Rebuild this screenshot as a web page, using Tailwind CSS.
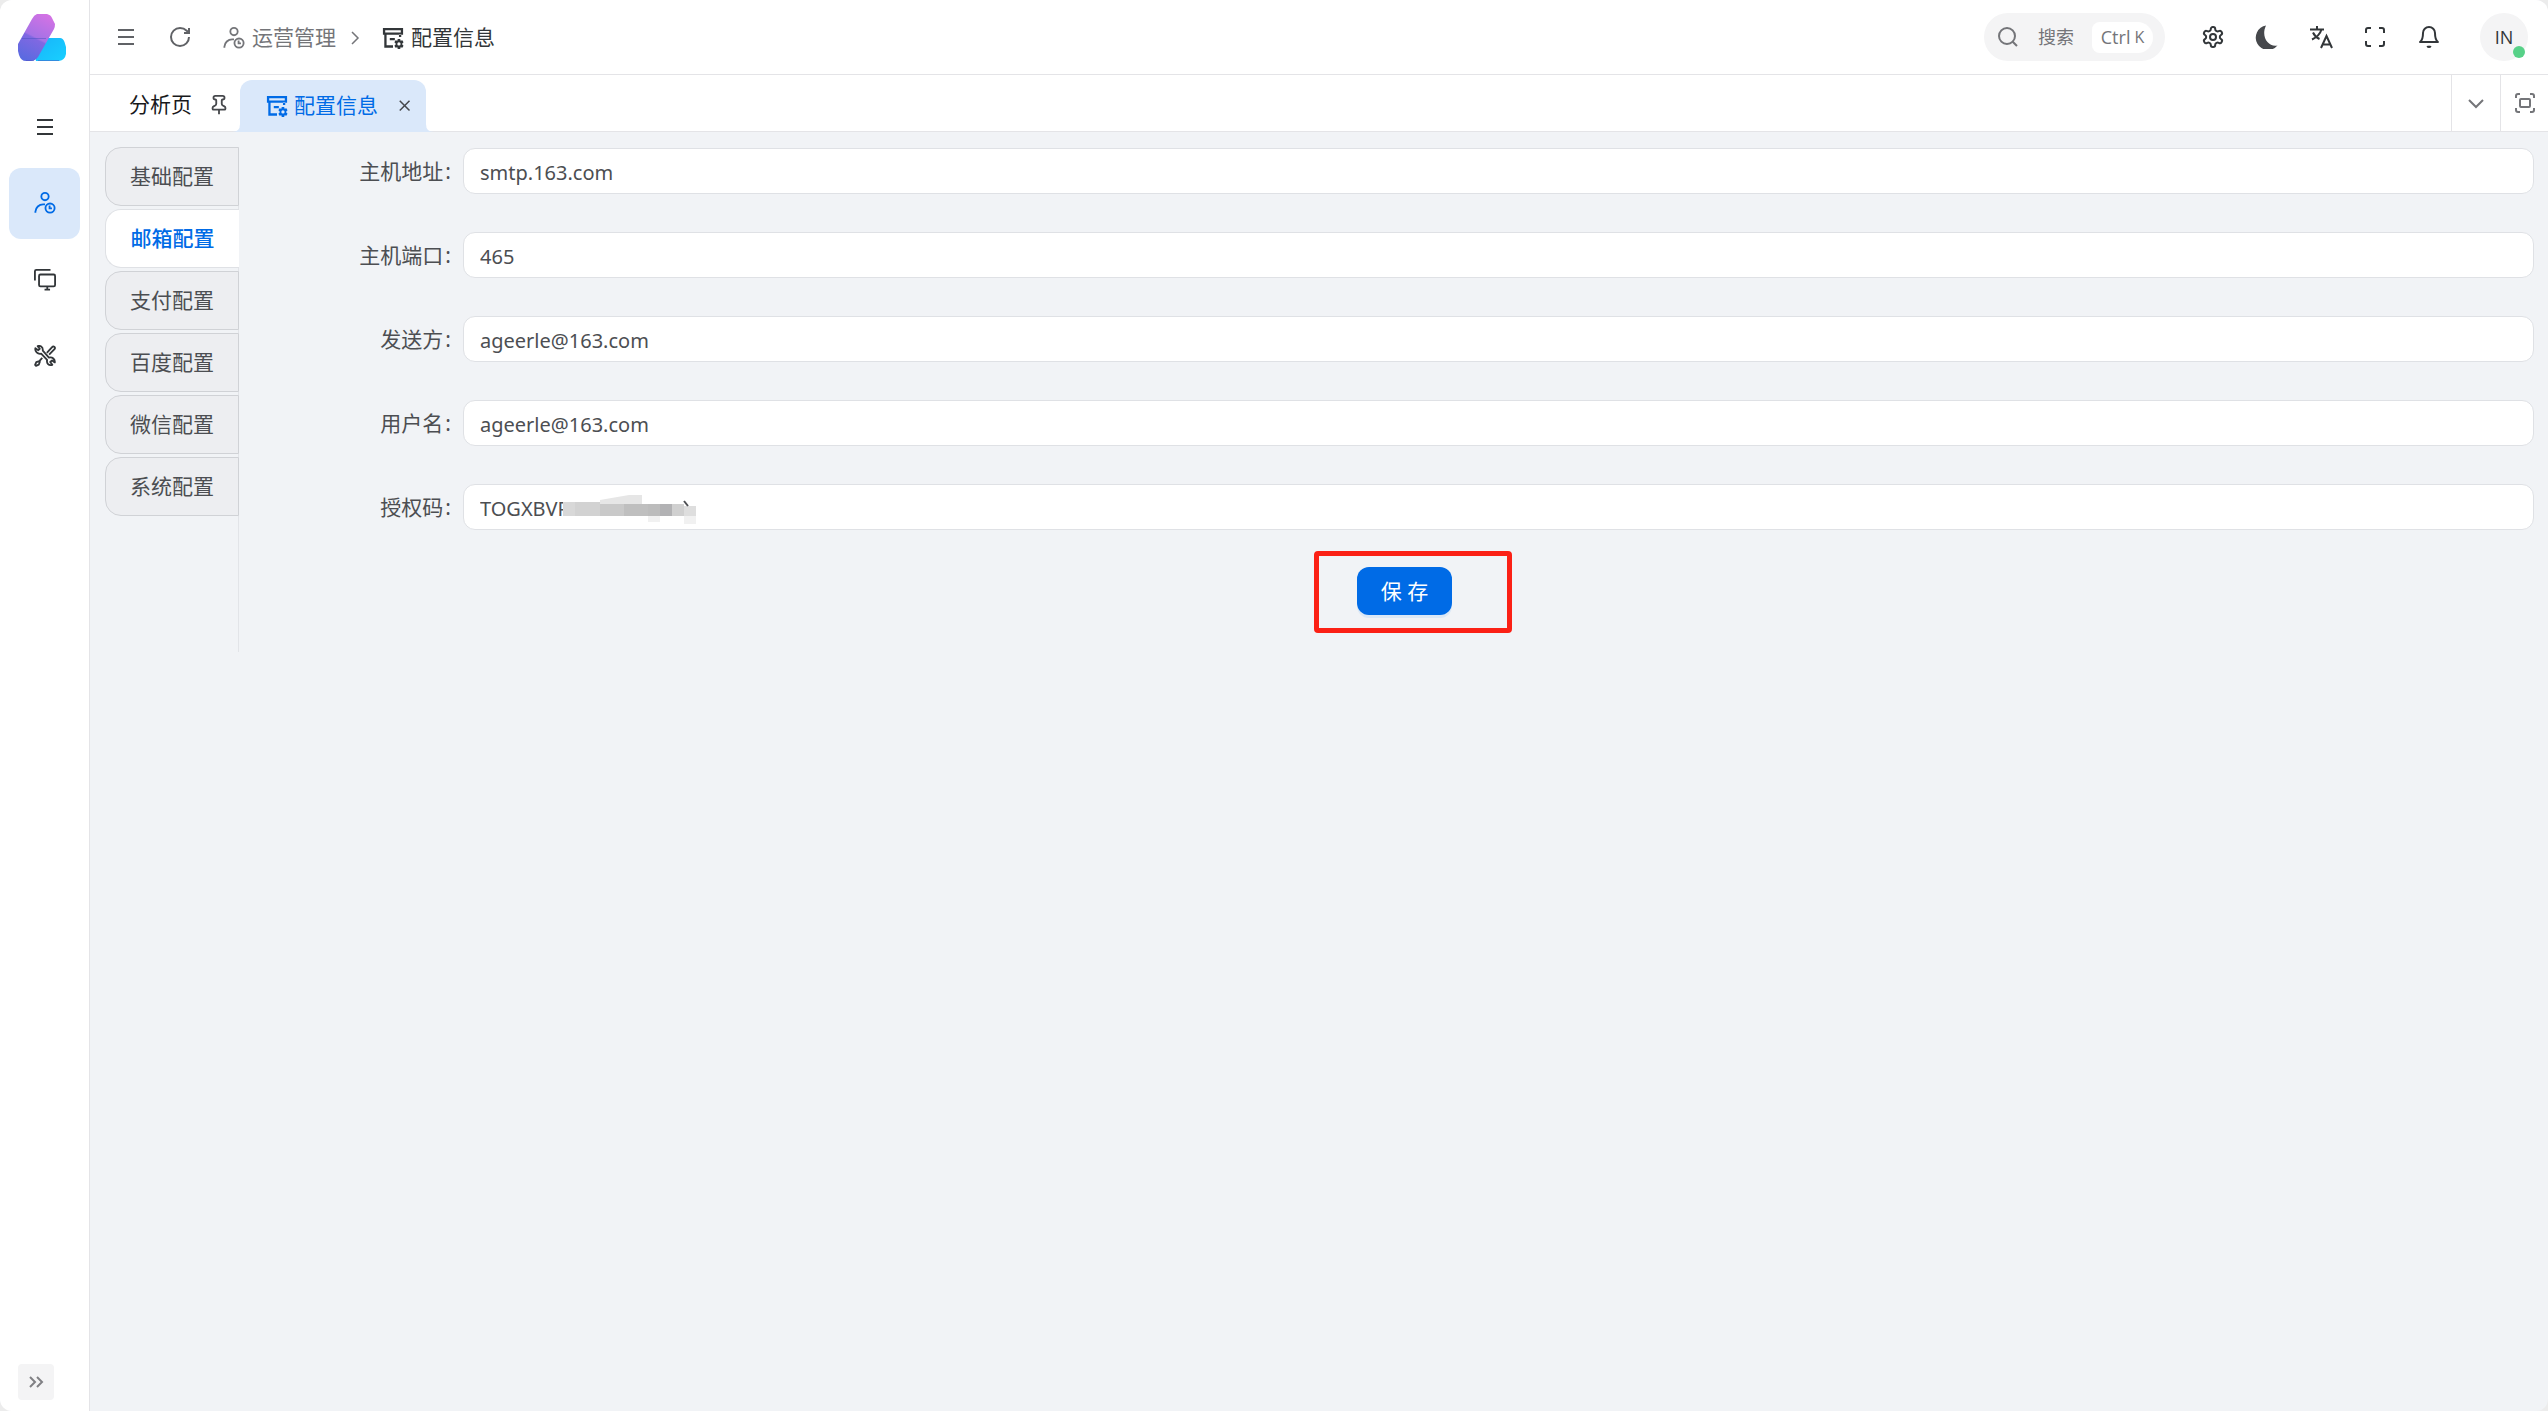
<!DOCTYPE html>
<html lang="zh-CN">
<head>
  <meta charset="UTF-8">
  <meta name="viewport" content="width=device-width, initial-scale=1.0">
  <title>配置信息</title>
  <script src="https://cdn.jsdelivr.net/npm/@tailwindcss/browser@4"></script>
</head>
<body class="bg-[#ececec] font-['Noto_Sans','Noto_Sans_CJK_SC',sans-serif] text-[21px] text-[#323639]">

  <!-- Shared icons -->
  <svg class="hidden">
    <symbol id="menu" viewBox="0 0 24 24"><path d="M4 5h16M4 12h16M4 19h16"/></symbol>
    <symbol id="user-clock" viewBox="0 0 24 24">
      <circle cx="12" cy="5" r="4"/>
      <path d="M1.500 22.500v-1a8.500 8.500 0 0 1 8.500-8h2"/>
      <circle cx="17.500" cy="17.500" r="5"/>
      <path d="M17 14.800v3h2.600"/>
    </symbol>
    <symbol id="page-gear" viewBox="0 0 24 24">
      <path fill="currentColor" stroke="none" fill-rule="evenodd" d="M1 1h22v7.500H5V20h7v2.500H2.500v-14H1zM3.500 3.500V6h17V3.500zM8.500 12H14v2.500H8.500zM18.500 8H21v3h-2.500z"/>
      <path fill="currentColor" stroke="none" fill-rule="evenodd" d="M17.200 13h2.600l.5 1.900 1.900-.5 1.300 2.200-1.400 1.400v1l1.400 1.400-1.300 2.200-1.900-.5-.5 1.900h-2.600l-.5-1.900-1.900.5-1.300-2.200 1.400-1.400v-1l-1.400-1.400 1.300-2.200 1.900.5zM18.500 16.700a1.800 1.800 0 1 0 0 3.600 1.800 1.800 0 0 0 0-3.600z"/>
    </symbol>
  </svg>

  <div class="flex min-h-screen overflow-hidden rounded-xl bg-[#f1f3f6]">

    <!-- Sidebar -->
    <aside class="flex w-[90px] shrink-0 flex-col border-r border-[#e4e4e7] bg-white">
      <a href="#" aria-label="首页" class="flex h-[75px] items-center pl-[18px]">
        <svg class="size-12" viewBox="0 0 48 48">
          <defs>
            <linearGradient id="purple" x1="0.7" y1="0" x2="0.3" y2="1">
              <stop offset="0" stop-color="#d272e4"/>
              <stop offset="0.5" stop-color="#a572e6"/>
              <stop offset="0.54" stop-color="#8068e2"/>
              <stop offset="1" stop-color="#5b6ae0"/>
            </linearGradient>
            <linearGradient id="cyan" x1="0" y1="0" x2="1" y2="1">
              <stop offset="0" stop-color="#18b4fa"/>
              <stop offset="1" stop-color="#18d0ff"/>
            </linearGradient>
          </defs>
          <path fill="url(#cyan)" d="M27 24h15q3 0 4.500 4l1.500 5v7q-1 6-7 7H18q-1-2 0-4z"/>
          <path fill="url(#purple)" d="M19 0h10q4 1 5 4l3 6q0 3-1 5L20 43q-3 4-7 4H8q-5 0-7-6l-1-4v-7L14 5q2-4 5-5z"/>
          <path d="M4 24.500h24M8 46.500h8M20 46.500h21" fill="none" stroke="#4b4fc0" stroke-opacity="0.5"/>
        </svg>
      </a>
      <nav class="mt-[17px] flex flex-1 flex-col gap-[5px] px-[9px] stroke-[2]">
        <button aria-label="菜单" class="flex h-[71px] w-full items-center justify-center rounded-xl pb-0.5">
          <svg class="size-6 fill-none stroke-current"><use href="#menu"/></svg>
        </button>
        <button aria-label="运营管理" class="flex h-[71px] w-full items-center justify-center rounded-xl bg-[#dae8fa] pb-0.5 text-[#006be6]">
          <svg class="size-[22px] fill-none stroke-current"><use href="#user-clock"/></svg>
        </button>
        <button aria-label="监控" class="flex h-[71px] w-full items-center justify-center rounded-xl">
          <svg class="size-[22px] fill-none stroke-current" viewBox="0 0 24 24">
            <path d="M1 12.500V2.500q0-1.500 1.500-1.500H18"/>
            <rect x="5.500" y="6" width="17.500" height="13" rx="1.500"/>
            <path d="M11.500 22.500h6M14.500 19v3.500"/>
          </svg>
        </button>
        <button aria-label="工具" class="flex h-[71px] w-full items-center justify-center rounded-xl">
          <svg class="size-[22px] fill-none stroke-current" stroke-linejoin="round" viewBox="0 0 24 24">
            <path d="M1.500 3.500l3.200 2.200 1.600-1.600L4 1.200c2.400-.8 6 .6 5.600 5l6.700 7.500c4-.8 6.700 1.600 6.400 5.300l-3-2.200-2 1.800 2.300 3c-4 1.400-6.500-1.500-5.700-5.300L7.800 9.500c-4 .8-7-2.500-6.300-6z"/>
            <path d="M14 8.500l5.500-6q1.500-1.600 2.800-.4t-.2 2.700L16.500 10.500M9 14l-3.200 3.500M5.800 17.500l-3.300 1.200-1.300 3 1 1 3-1.200 1.200-3.200z"/>
          </svg>
        </button>
      </nav>
      <button aria-label="展开" class="mb-[11px] ml-[18px] flex size-9 items-center justify-center rounded bg-[#f4f4f5] text-[#808084]">
        <svg class="size-6 fill-none stroke-current stroke-2" viewBox="0 0 24 24"><path d="m6 17 5-5-5-5M13 17l5-5-5-5"/></svg>
      </button>
    </aside>

    <div class="flex min-w-0 flex-1 flex-col">

      <!-- Header -->
      <header class="flex h-[75px] items-center border-b border-[#e4e4e7] bg-white pr-5 pl-6">
        <button aria-label="折叠菜单" class="text-[#606266]"><svg class="size-6 fill-none stroke-current stroke-2"><use href="#menu"/></svg></button>
        <button aria-label="刷新" class="ml-[30px] text-[#606266]">
          <svg class="size-6 fill-none stroke-current stroke-2" viewBox="0 0 24 24"><path d="M21 12a9 9 0 1 1-9-9c2.520 0 4.930 1 6.740 2.740L21 8M21 3v5h-5"/></svg>
        </button>
        <nav class="ml-[31px] flex items-center pt-0.5">
          <a href="#" class="flex items-center gap-[7px] text-[#747579]">
            <svg class="size-[22px] fill-none stroke-current stroke-2"><use href="#user-clock"/></svg>运营管理
          </a>
          <svg class="mx-[7px] size-6 fill-none stroke-[#747579] stroke-[1.500]" viewBox="0 0 24 24"><path d="m9 18 6-6-6-6"/></svg>
          <a href="#" class="ml-2 flex items-center gap-[7px]">
            <svg class="size-[22px]"><use href="#page-gear"/></svg>配置信息
          </a>
        </nav>

        <button class="ml-auto flex h-12 items-center rounded-full bg-[#f4f4f5] pr-3 pl-3 text-[18px] text-[#747579]">
          <svg class="size-6 fill-none stroke-current stroke-2" viewBox="0 0 24 24"><circle cx="11" cy="11" r="8"/><path d="m21 21-4.300-4.300"/></svg>
          <span class="ml-[18px]">搜索</span>
          <kbd class="ml-[18px] flex h-[31px] w-[61px] items-center justify-center gap-1 rounded-lg rounded-r-2xl bg-white font-['Open_Sans',sans-serif] text-[18px]">Ctrl<span class="text-base">K</span></kbd>
        </button>
        <div class="ml-9 flex items-center gap-[30px]">
          <button aria-label="设置">
            <svg class="size-6 fill-none stroke-current stroke-2" viewBox="0 0 24 24"><path d="M12.220 2h-.44a2 2 0 0 0-2 2v.18a2 2 0 0 1-1 1.730l-.43.25a2 2 0 0 1-2 0l-.15-.08a2 2 0 0 0-2.730.73l-.22.38a2 2 0 0 0 .73 2.730l.15.1a2 2 0 0 1 1 1.720v.51a2 2 0 0 1-1 1.740l-.15.09a2 2 0 0 0-.73 2.730l.22.38a2 2 0 0 0 2.730.73l.15-.08a2 2 0 0 1 2 0l.43.25a2 2 0 0 1 1 1.730V20a2 2 0 0 0 2 2h.44a2 2 0 0 0 2-2v-.18a2 2 0 0 1 1-1.730l.43-.25a2 2 0 0 1 2 0l.15.08a2 2 0 0 0 2.730-.73l.22-.39a2 2 0 0 0-.73-2.730l-.15-.08a2 2 0 0 1-1-1.740v-.5a2 2 0 0 1 1-1.740l.15-.09a2 2 0 0 0 .73-2.730l-.22-.38a2 2 0 0 0-2.730-.73l-.15.08a2 2 0 0 1-2 0l-.43-.25a2 2 0 0 1-1-1.730V4a2 2 0 0 0-2-2z"/><circle cx="12" cy="12" r="3"/></svg>
          </button>
          <button aria-label="深色模式">
            <svg class="size-6 fill-[#46484c]" viewBox="0 0 24 24"><path d="M11 .5A12.300 12.300 0 1 0 22.500 20.500C13.500 22.500 5.500 12 11 .5z"/></svg>
          </button>
          <button aria-label="语言">
            <svg class="size-6 fill-none stroke-current stroke-2" viewBox="0 0 24 24"><path d="M1 4.500h14M8 1v3.500M3 14.500Q10.500 11 12.500 4.500M4 7.500q2 4.500 6.500 6.500M12 23l5.500-12L23 23M14 19.500h7"/></svg>
          </button>
          <button aria-label="全屏">
            <svg class="size-6 fill-none stroke-current stroke-2" viewBox="0 0 24 24"><path d="M8 3H5a2 2 0 0 0-2 2v3M21 8V5a2 2 0 0 0-2-2h-3M3 16v3a2 2 0 0 0 2 2h3M16 21h3a2 2 0 0 0 2-2v-3"/></svg>
          </button>
          <button aria-label="通知">
            <svg class="size-6 fill-none stroke-current stroke-2" stroke-linejoin="round" viewBox="0 0 24 24"><path d="M6 8a6 6 0 0 1 12 0c0 7 3 9 3 9H3s3-2 3-9M10.300 21a1.940 1.940 0 0 0 3.400 0"/></svg>
          </button>
        </div>
        <button class="relative ml-[39px] flex size-12 items-center justify-center rounded-full bg-[#f4f4f5] font-['Open_Sans',sans-serif] text-[18px]">
          IN
          <span class="absolute right-[3px] bottom-[3px] size-3 rounded-full bg-[#57d188]"></span>
        </button>
      </header>

      <!-- Page tabs -->
      <div class="flex h-[57px] border-b border-[#e4e4e7] bg-white">
        <button class="flex items-center pt-1 pr-2.5 pl-[39px] text-[#18191b]">
          分析页
          <svg class="ml-4 size-[22px] fill-none stroke-[#46484c] stroke-2" viewBox="0 0 24 24"><path d="M12 17v5M9 10.760a2 2 0 0 1-1.110 1.790l-1.780.9A2 2 0 0 0 5 15.240V16a1 1 0 0 0 1 1h12a1 1 0 0 0 1-1v-.76a2 2 0 0 0-1.110-1.790l-1.780-.9A2 2 0 0 1 15 10.760V7a1 1 0 0 1 1-1 2 2 0 0 0 0-4H8a2 2 0 0 0 0 4 1 1 0 0 1 1 1z"/></svg>
        </button>
        <div class="relative mt-[5px] -mb-px flex w-[186px] items-center rounded-t-xl bg-[#dae8fa] pb-px pl-[26px] text-[#006be6]">
          <svg class="absolute bottom-0 -left-2 size-2 fill-[#dae8fa]" viewBox="0 0 8 8"><path d="M8 0v8H0q8 0 8-8z"/></svg>
          <svg class="absolute -right-2 bottom-0 size-2 fill-[#dae8fa]" viewBox="0 0 8 8"><path d="M0 0v8h8q-8 0-8-8z"/></svg>
          <svg class="mr-1.5 size-[22px]"><use href="#page-gear"/></svg>
          <a href="#">配置信息</a>
          <button aria-label="关闭" class="ml-[18px] text-[#46484c]">
            <svg class="size-[18px] fill-none stroke-current stroke-2" viewBox="0 0 24 24"><path d="M18 5 5 18M5 5l13 13"/></svg>
          </button>
        </div>
        <button aria-label="更多" class="ml-auto flex w-[49px] items-center justify-center border-l border-[#e4e4e7] text-[#747579]">
          <svg class="size-6 fill-none stroke-current stroke-2" viewBox="0 0 24 24"><path d="m5 9 7 7 7-7"/></svg>
        </button>
        <button aria-label="最大化" class="flex w-12 items-center justify-center border-l border-[#e4e4e7] text-[#747579]">
          <svg class="size-6 fill-none stroke-current stroke-2" viewBox="0 0 24 24"><path d="M3 7V5a2 2 0 0 1 2-2h2M17 3h2a2 2 0 0 1 2 2v2M21 17v2a2 2 0 0 1-2 2h-2M7 21H5a2 2 0 0 1-2-2v-2"/><rect x="7" y="8" width="10" height="8" rx="1"/></svg>
        </button>
      </div>

      <!-- Content -->
      <main class="flex items-start p-[15px] pr-3.5">
        <div class="flex h-[505px] w-[134px] shrink-0 flex-col gap-[3px] border-r border-[#e2e4e8] text-[#4c4e52]">
          <button class="-mr-px h-[59px] rounded-l-2xl border border-[#d0d2d6] bg-[#edeef1] pt-px">基础配置</button>
          <button class="-mr-px h-[59px] rounded-l-2xl border border-r-0 border-[#dfe1e5] bg-white pt-px font-medium text-[#006be6]">邮箱配置</button>
          <button class="-mr-px h-[59px] rounded-l-2xl border border-[#d0d2d6] bg-[#edeef1] pt-px">支付配置</button>
          <button class="-mr-px h-[59px] rounded-l-2xl border border-[#d0d2d6] bg-[#edeef1] pt-px">百度配置</button>
          <button class="-mr-px h-[59px] rounded-l-2xl border border-[#d0d2d6] bg-[#edeef1] pt-px">微信配置</button>
          <button class="-mr-px h-[59px] rounded-l-2xl border border-[#d0d2d6] bg-[#edeef1] pt-px">系统配置</button>
        </div>

        <form class="flex min-w-0 flex-1 flex-col gap-[38px] pt-px pl-9 text-[#4c4e52]">
          <div class="flex items-center">
            <label for="host" class="w-[188px] pt-0.5 pr-3 text-right">主机地址<span class="ml-0.5">:</span></label>
            <input id="host" type="text" value="smtp.163.com" class="h-[46px] min-w-0 flex-1 rounded-xl border border-[#dfe1e5] bg-white px-4 pt-0.5 text-xl">
          </div>
          <div class="flex items-center">
            <label for="port" class="w-[188px] pt-0.5 pr-3 text-right">主机端口<span class="ml-0.5">:</span></label>
            <input id="port" type="text" value="465" class="h-[46px] min-w-0 flex-1 rounded-xl border border-[#dfe1e5] bg-white px-4 pt-0.5 text-xl">
          </div>
          <div class="flex items-center">
            <label for="from" class="w-[188px] pt-0.5 pr-3 text-right">发送方<span class="ml-0.5">:</span></label>
            <input id="from" type="text" value="ageerle@163.com" class="h-[46px] min-w-0 flex-1 rounded-xl border border-[#dfe1e5] bg-white px-4 pt-0.5 text-xl">
          </div>
          <div class="flex items-center">
            <label for="user" class="w-[188px] pt-0.5 pr-3 text-right">用户名<span class="ml-0.5">:</span></label>
            <input id="user" type="text" value="ageerle@163.com" class="h-[46px] min-w-0 flex-1 rounded-xl border border-[#dfe1e5] bg-white px-4 pt-0.5 text-xl">
          </div>
          <div class="relative flex items-center">
            <label for="code" class="w-[188px] pt-0.5 pr-3 text-right">授权码<span class="ml-0.5">:</span></label>
            <input id="code" type="text" value="TOGXBVP" class="h-[46px] min-w-0 flex-1 rounded-xl border border-[#dfe1e5] bg-white px-4 pt-0.5 text-xl">
            <!-- Redacted part of the code -->
            <svg class="absolute top-2.5 left-[288px] h-8 w-[134px]" viewBox="0 0 134 32">
              <path fill="#fff" d="M0 4h24v22H0z"/>
              <path fill="#e6e6e6" d="M37 6 66 1h13v9H37z"/>
              <path fill="#d8d8d8" d="M0 8h12v14H0z"/>
              <path fill="#d2d2d2" d="M12 8h25v14H12z"/>
              <path fill="#c9c9c9" d="M37 10h48v12H37z"/>
              <path fill="#bfbfbf" d="M61 10h24v12H61z"/>
              <path fill="#bcbcbc" d="M85 10h12v12H85z"/>
              <path fill="#b2b2b4" d="M97 10h12v12H97z"/>
              <path fill="#d0d0d0" d="M109 10h12v12h-12z"/>
              <path fill="#dedede" d="M121 12h12v10h-12z"/>
              <path fill="#f1f1f1" d="M85 22h12v6H85zM121 22h12v8h-12z"/>
              <path stroke="#4c4e52" stroke-width="2" d="m121 7 4 5"/>
            </svg>
          </div>
          <div class="-mt-px flex justify-center">
            <div class="relative">
              <button type="submit" class="flex h-12 w-[95px] items-center justify-center rounded-xl bg-[#006be6] pt-0.5 text-white shadow-[0_3px_0_#dbe8f6]">保 存</button>
              <!-- Highlight frame -->
              <div class="pointer-events-none absolute -top-4 -right-[60px] -bottom-[18px] -left-[43px] rounded-sm border-5 border-[#fb2015]"></div>
            </div>
          </div>
        </form>
      </main>
    </div>
  </div>
</body>
</html>
